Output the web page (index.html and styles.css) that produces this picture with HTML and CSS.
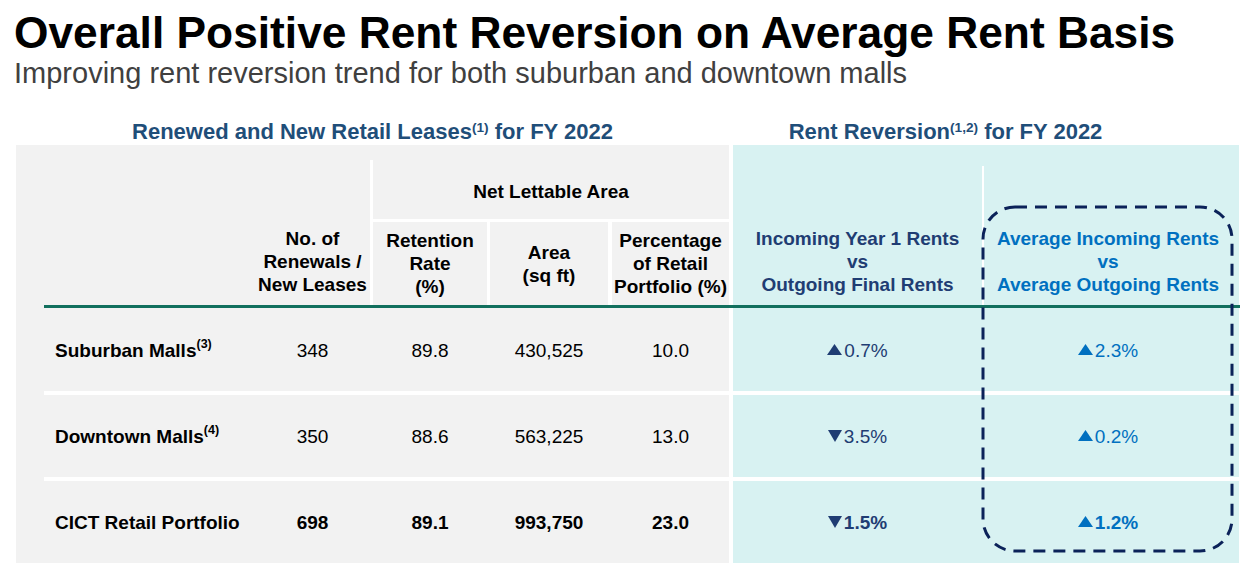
FILE: index.html
```html
<!DOCTYPE html>
<html lang="en">
<head>
<meta charset="utf-8">
<title>Overall Positive Rent Reversion on Average Rent Basis</title>
<link rel="stylesheet" href="styles.css">
</head>
<body>
<div class="page">
  <h1 class="title">Overall Positive Rent Reversion on Average Rent Basis</h1>
  <p class="subtitle">Improving rent reversion trend for both suburban and downtown malls</p>
  <div class="sections">
    <div class="sec sec-left">Renewed and New Retail Leases<sup>(1)</sup> for FY 2022</div>
    <div class="sec sec-right">Rent Reversion<sup>(1,2)</sup> for FY 2022</div>
  </div>
  <div class="table">
    <div class="cell h-no">No. of<br>Renewals /<br>New Leases</div>
    <div class="v-div1"></div>
    <div class="cell h-nla">Net Lettable Area</div>
    <div class="h-line"></div>
    <div class="cell h-ret">Retention<br>Rate<br>(%)</div>
    <div class="v-div2"></div>
    <div class="cell h-area">Area<br>(sq ft)</div>
    <div class="v-div3"></div>
    <div class="cell h-pct">Percentage<br>of Retail<br>Portfolio (%)</div>
    <div class="cell h-in1">Incoming Year 1 Rents<br>vs<br>Outgoing Final Rents</div>
    <div class="v-div4"></div>
    <div class="cell h-in2">Average Incoming Rents<br>vs<br>Average Outgoing Rents</div>
    <div class="green-line"></div>

    <div class="cell c-label r1"><span>Suburban Malls<sup>(3)</sup></span></div>
    <div class="cell c-num c-no r1">348</div>
    <div class="cell c-num c-ret r1">89.8</div>
    <div class="cell c-num c-area r1">430,525</div>
    <div class="cell c-num c-pct r1">10.0</div>
    <div class="cell c-t1 r1"><svg class="tri" width="15" height="11" viewBox="0 0 15 11"><polygon points="0,11 7.5,0 15,11"/></svg>0.7%</div>
    <div class="cell c-t2 r1"><svg class="tri" width="15" height="11" viewBox="0 0 15 11"><polygon points="0,11 7.5,0 15,11"/></svg>2.3%</div>
    <div class="row-line l1"></div>

    <div class="cell c-label r2"><span>Downtown Malls<sup>(4)</sup></span></div>
    <div class="cell c-num c-no r2">350</div>
    <div class="cell c-num c-ret r2">88.6</div>
    <div class="cell c-num c-area r2">563,225</div>
    <div class="cell c-num c-pct r2">13.0</div>
    <div class="cell c-t1 r2"><svg class="tri" width="14" height="12" viewBox="0 0 14 12"><polygon points="0,0 14,0 7,12"/></svg>3.5%</div>
    <div class="cell c-t2 r2"><svg class="tri" width="15" height="11" viewBox="0 0 15 11"><polygon points="0,11 7.5,0 15,11"/></svg>0.2%</div>
    <div class="row-line l2"></div>

    <div class="cell c-label r3">CICT Retail Portfolio</div>
    <div class="cell c-num c-no r3 bold">698</div>
    <div class="cell c-num c-ret r3 bold">89.1</div>
    <div class="cell c-num c-area r3 bold">993,750</div>
    <div class="cell c-num c-pct r3 bold">23.0</div>
    <div class="cell c-t1 r3 bold"><svg class="tri" width="14" height="12" viewBox="0 0 14 12"><polygon points="0,0 14,0 7,12"/></svg>1.5%</div>
    <div class="cell c-t2 r3 bold"><svg class="tri" width="15" height="11" viewBox="0 0 15 11"><polygon points="0,11 7.5,0 15,11"/></svg>1.2%</div>

    <svg class="highlight" width="254" height="349" viewBox="0 0 254 349">
      <rect x="2" y="2" width="249" height="344" rx="32" ry="32" fill="none" stroke="#0b2259" stroke-width="3" stroke-dasharray="12 8"/>
    </svg>
  </div>
</div>
</body>
</html>
```
FILE: styles.css
```css
* { box-sizing: border-box; }
html, body { margin: 0; padding: 0; background: #fff; }
body {
  font-family: "Liberation Sans", Arial, sans-serif;
  color: #000;
  width: 1248px;
  height: 567px;
  overflow: hidden;
}
.page { padding-top: 7px; }
.title {
  margin: 0;
  padding-left: 14px;
  font-size: 44.3px;
  line-height: 51px;
  font-weight: bold;
  color: #000;
}
.subtitle {
  margin: 0;
  padding-left: 14px;
  font-size: 29px;
  line-height: 31px;
  color: #404040;
}
.sections {
  display: flex;
  gap: 4px;
  margin-left: 16px;
  padding-top: 29px;
}
.sec {
  font-size: 22px;
  line-height: 27px;
  font-weight: bold;
  color: #1f4e79;
  text-align: center;
}
.sec sup {
  font-size: 0.62em;
  line-height: 0;
  vertical-align: 0.55em;
}
.c-label sup {
  font-size: 0.66em;
  line-height: 0;
  vertical-align: 0.72em;
}
.sec-left { width: 713px; }
.sec-right { width: 506px; padding-right: 81px; }

.table {
  position: relative;
  margin-left: 16px;
  width: 1223px;
  display: grid;
  grid-template-columns: 28px 211px 115px 3px 114px 3px 118px 4px 117px 4px 249px 2px 255px;
  grid-template-rows: 15px 59px 3px 83px 3px 83px 4px 82px 4px 82px;
  background: linear-gradient(to right, #f2f2f2 0, #f2f2f2 713px, #fff 713px, #fff 717px, #d8f2f2 717px);
  font-size: 19px;
  line-height: 23px;
}
.cell {
  display: flex;
  align-items: center;
  justify-content: center;
  text-align: center;
}
.h-no, .h-nla, .h-ret, .h-area, .h-pct, .h-in1, .h-in2 { font-weight: bold; }
.h-no { grid-column: 3; grid-row: 1 / 5; align-items: flex-end; padding-bottom: 9px; }
.v-div1 { grid-column: 4; grid-row: 2 / 5; background: #fff; }
.h-nla { grid-column: 5 / 10; grid-row: 2; padding-top: 4px; }
.h-line { grid-column: 5 / 10; grid-row: 3; background: #fff; }
.h-ret { grid-column: 5; grid-row: 4; }
.v-div2 { grid-column: 6; grid-row: 4; background: #fff; }
.h-area { grid-column: 7; grid-row: 4; }
.v-div3 { grid-column: 8; grid-row: 4; background: #fff; }
.h-pct { grid-column: 9; grid-row: 4; }
.h-in1 { grid-column: 11; grid-row: 1 / 5; align-items: flex-end; padding-bottom: 9px; color: #1f3d73; }
.v-div4 { grid-column: 12; grid-row: 1 / 5; margin-top: 21px; background: #fff; }
.h-in2 { grid-column: 13; grid-row: 1 / 5; align-items: flex-end; padding-bottom: 9px; padding-right: 7px; color: #0070c0; }
.green-line { grid-column: 2 / 14; grid-row: 5; background: #12705e; margin-right: -1px; }

.r1 { grid-row: 6; }
.r2 { grid-row: 8; }
.r3 { grid-row: 10; }
.l1 { grid-row: 7; }
.l2 { grid-row: 9; }
.row-line { grid-column: 2 / 14; background: #fff; }

.c-label { grid-column: 2; justify-content: flex-start; padding-left: 11px; font-weight: bold; padding-top: 1px; }
.c-no { grid-column: 3; }
.c-ret { grid-column: 5; }
.c-area { grid-column: 7; }
.c-pct { grid-column: 9; }
.c-num { padding-top: 1px; }
.c-t1 { grid-column: 11; color: #1f3d73; padding-top: 1px; }
.c-t2 { grid-column: 13; color: #0070c0; padding-right: 7px; padding-top: 1px; }
.bold { font-weight: bold; }
.tri { fill: currentColor; margin-right: 2px; align-self: center; margin-top: -2px; }

.highlight {
  position: absolute;
  left: 965px;
  top: 60px;
  pointer-events: none;
}
```
